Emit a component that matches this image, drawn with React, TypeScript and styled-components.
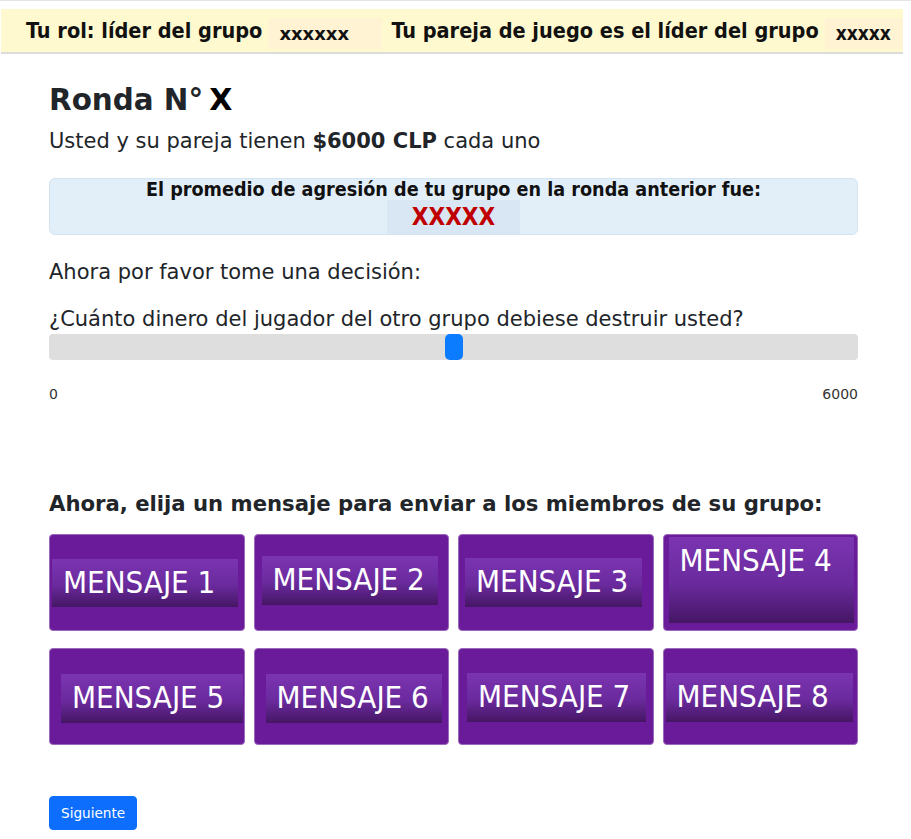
import React from "react"
import styled, { createGlobalStyle } from "styled-components"

const GlobalStyle = createGlobalStyle`
	html, body {
		margin: 0;
		padding: 0;
		background: #ffffff;
	}
	body {
		font-family: "DejaVu Sans", "Liberation Sans", sans-serif;
		color: #212529;
		border-top: 1px solid #e4e4e4;
	}
`

const condensed = `
	font-family: "DejaVu Sans Condensed", "DejaVu Sans", sans-serif;
	font-stretch: condensed;
`

const TopBar = styled.div`
	${condensed}
	display: flex;
	align-items: center;
	height: 43px;
	margin: 8px 8px 0 1px;
	padding-left: 25px;
	background: #fff9cf;
	border-bottom: 2px solid #dcdcdc;
	font-size: 21.5px;
	font-weight: bold;
	color: #111;
	white-space: nowrap;
	overflow: hidden;
`

const BarText = styled.span<{ $before?: number }>`
	margin-left: ${props => props.$before || 0}px;
	margin-right: 6px;
`

const BarValue = styled.span<{ $width: number; $narrow?: boolean }>`
	display: flex;
	align-items: center;
	height: 31px;
	margin-top: 5px;
	min-width: ${props => props.$width}px;
	padding-left: 11px;
	box-sizing: border-box;
	background: #fff3d4;
	font-weight: bold;
	${props => props.$narrow
		? "font-size: 19px;"
		: `font-size: 18px; font-family: "DejaVu Sans", sans-serif; font-stretch: normal;`}
`

const Content = styled.div`
	padding: 0 53px 0 49px;
`

const Title = styled.h2`
	margin: 28px 0 8px;
	font-size: 29.4px;
	line-height: 1.2;
	font-weight: bold;
	color: #212529;
`

const TitleMark = styled.span`
	margin-left: 6px;
	color: #000;
	font-size: 30px;
	font-weight: 900;
`

const Lead = styled.p`
	margin: 0 0 22px;
	font-size: 21px;
	line-height: 30px;
`

const Alert = styled.div`
	${condensed}
	display: flex;
	flex-direction: column;
	align-items: center;
	height: 57px;
	box-sizing: border-box;
	padding-top: 1px;
	background: #e2eff9;
	border: 1px solid #d2e3f1;
	border-radius: 6px;
	font-weight: bold;
	color: #111;
`

const AlertText = styled.div`
	font-size: 19.6px;
	line-height: 20px;
`

const AlertValue = styled.div`
	display: flex;
	align-items: center;
	justify-content: center;
	width: 133px;
	height: 37px;
	background: #d9e6f3;
	color: #c00000;
	font-size: 24px;
`

const Prompt = styled.p<{ $before: number; $after: number }>`
	margin: ${props => props.$before}px 0 ${props => props.$after}px;
	font-size: 21px;
	line-height: 30px;
`

const Track = styled.div`
	position: relative;
	height: 26px;
	background: #dedede;
	border-radius: 4px;
`

const Thumb = styled.div`
	position: absolute;
	top: 0;
	width: 18px;
	height: 26px;
	margin-left: -9px;
	background: #0b7bff;
	border-radius: 5px;
`

const Scale = styled.div`
	display: flex;
	justify-content: space-between;
	margin-top: 26px;
	font-size: 14px;
	color: #333;
`

const Subtitle = styled.h5`
	margin: 90px 0 18px;
	font-size: 21.2px;
	line-height: 24px;
	font-weight: bold;
`

const Grid = styled.div`
	display: grid;
	grid-template-columns: repeat(4, 1fr);
	column-gap: 9px;
	row-gap: 17px;
`

const Card = styled.div`
	display: flex;
	align-items: flex-start;
	height: 97px;
	box-sizing: border-box;
	background: #6a1b9a;
	border: 1px solid #9a69b9;
	border-radius: 4px;
	overflow: hidden;
	cursor: pointer;
`

const Band = styled.div<{ $x: number; $y: number; $w: number; $h: number }>`
	${condensed}
	margin: ${props => props.$y - 1}px 0 0 ${props => props.$x - 1}px;
	width: ${props => props.$w}px;
	height: ${props => props.$h}px;
	flex-shrink: 0;
	box-sizing: border-box;
	padding: 5px 11px 0;
	background: linear-gradient(to bottom, #7b34b1 0%, #6a2a9d 55%, #451664 100%);
	color: #fff;
	font-size: 31px;
	line-height: 36px;
	white-space: nowrap;
`

const NextButton = styled.button`
	margin: 51px 0 10px;
	height: 34px;
	padding: 0 11px;
	background: #0d6efd;
	border: 1px solid #0d6efd;
	border-radius: 4px;
	color: #fff;
	font-family: "DejaVu Sans", sans-serif;
	font-size: 13.6px;
	cursor: pointer;
`

const messages = [
	{ x: 3, y: 25, w: 186, h: 48 },
	{ x: 8, y: 22, w: 176, h: 49 },
	{ x: 7, y: 24, w: 177, h: 49 },
	{ x: 6, y: 3, w: 185, h: 86 },
	{ x: 12, y: 26, w: 182, h: 49 },
	{ x: 12, y: 26, w: 176, h: 49 },
	{ x: 9, y: 25, w: 179, h: 49 },
	{ x: 3, y: 25, w: 187, h: 49 },
]

const App = (): JSX.Element => {
	const value = 3000
	const max = 6000
	return (
		<>
			<GlobalStyle />
			<TopBar>
				<BarText>Tu rol: líder del grupo</BarText>
				<BarValue $width={114}>xxxxxx</BarValue>
				<BarText $before={9}>Tu pareja de juego es el líder del grupo</BarText>
				<BarValue $width={90} $narrow>xxxxx</BarValue>
			</TopBar>
			<Content>
				<Title>Ronda N°<TitleMark>X</TitleMark></Title>
				<Lead>Usted y su pareja tienen <b>$6000 CLP</b> cada uno</Lead>
				<Alert>
					<AlertText>El promedio de agresión de tu grupo en la ronda anterior fue:</AlertText>
					<AlertValue>XXXXX</AlertValue>
				</Alert>
				<Prompt $before={22} $after={17}>Ahora por favor tome una decisión:</Prompt>
				<Prompt $before={0} $after={0}>¿Cuánto dinero del jugador del otro grupo debiese destruir usted?</Prompt>
				<Track>
					<Thumb style={{ left: `${(value / max) * 100}%` }} />
				</Track>
				<Scale>
					<span>0</span>
					<span>6000</span>
				</Scale>
				<Subtitle>Ahora, elija un mensaje para enviar a los miembros de su grupo:</Subtitle>
				<Grid>
					{messages.map((m, i) => (
						<Card key={i}>
							<Band $x={m.x} $y={m.y} $w={m.w} $h={m.h}>MENSAJE {i + 1}</Band>
						</Card>
					))}
				</Grid>
				<NextButton>Siguiente</NextButton>
			</Content>
		</>
	)
}

export default App
